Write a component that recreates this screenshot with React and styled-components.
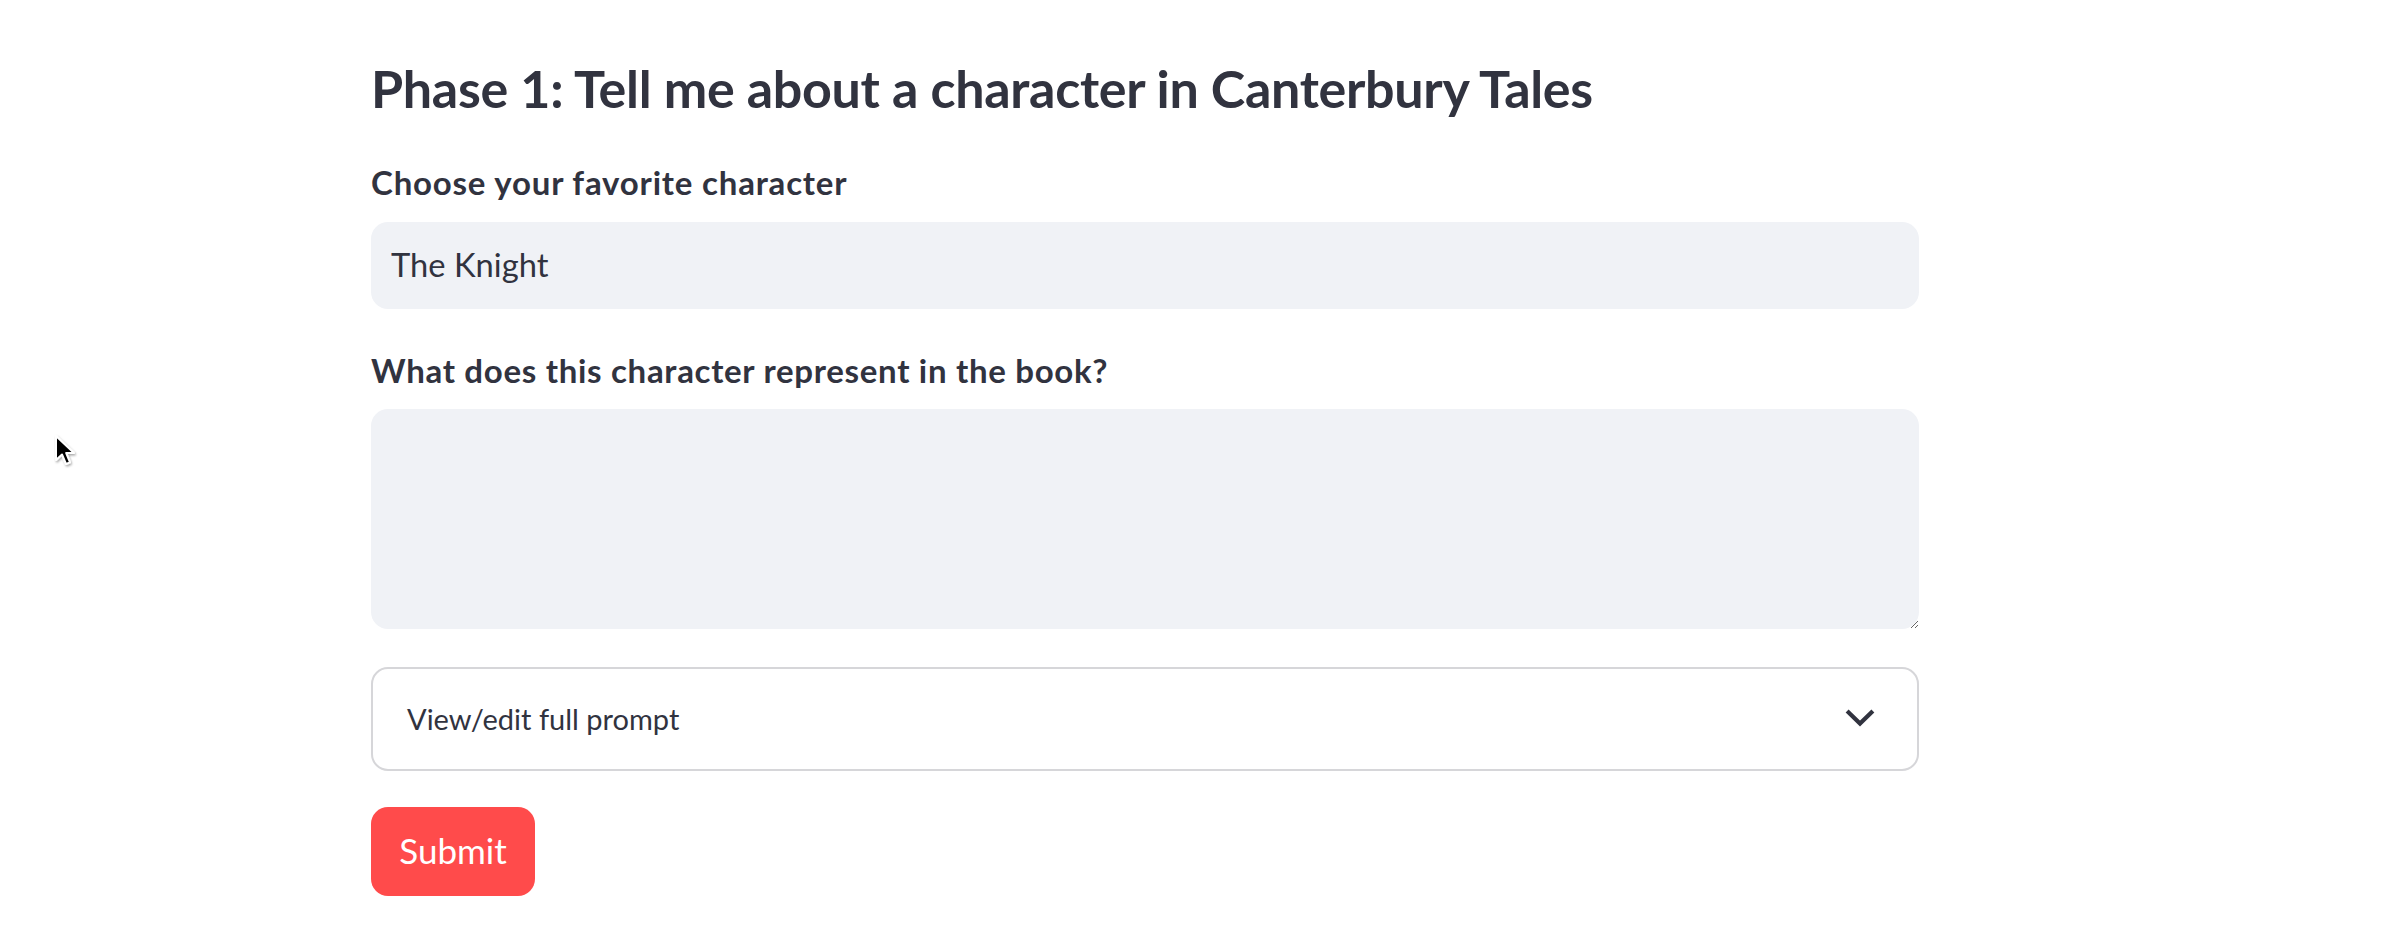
import React from "react";
import styled, { createGlobalStyle } from "styled-components";

const Global = createGlobalStyle`
  html, body { margin: 0; padding: 0; background: #ffffff; }
  body { font-family: "Lato", "Noto Sans", sans-serif; color: #31333f; }
  * { box-sizing: border-box; }
`;

const Page = styled.div`
  position: relative;
  width: 2384px;
  height: 952px;
  overflow: hidden;
  padding: 51px 0 0 371px;
`;

const Form = styled.form`
  width: 1548px;
  display: flex;
  flex-direction: column;
`;

const Heading = styled.h3`
  margin: 0;
  font-size: 52px;
  line-height: 74px;
  font-weight: 700;
  color: #31333f;
  letter-spacing: -0.3px;
`;

const Label = styled.label`
  display: block;
  margin-top: ${(p) => p.$top}px;
  font-size: 33px;
  line-height: 48px;
  font-weight: 700;
  color: #31333f;
  letter-spacing: ${(p) => p.$spacing}px;
`;

const TextInput = styled.input`
  margin-top: 16px;
  width: 100%;
  height: 87px;
  border: none;
  outline: none;
  border-radius: 17px;
  background: #f0f2f6;
  padding: 0 20px 2px;
  font-family: inherit;
  font-size: 32.7px;
  color: #31333f;
`;

const TextArea = styled.textarea`
  margin-top: 15px;
  width: 100%;
  height: 220px;
  border: none;
  outline: none;
  border-radius: 17px;
  background: #f0f2f6;
  padding: 20px;
  font-family: inherit;
  font-size: 32.7px;
  color: #31333f;
  resize: vertical;
  display: block;
`;

const Expander = styled.div`
  margin-top: 38px;
  height: 104px;
  border: 2px solid #d6d6d9;
  border-radius: 17px;
  display: flex;
  align-items: center;
  justify-content: space-between;
  padding: 0 36px 2px 34px;
`;

const ExpanderLabel = styled.span`
  font-size: 29px;
  color: #31333f;
`;

const Submit = styled.button`
  margin-top: 36px;
  align-self: flex-start;
  width: 164px;
  height: 89px;
  border: none;
  border-radius: 17px;
  background: #ff4b4b;
  color: #ffffff;
  font-family: inherit;
  font-size: 35px;
  padding: 0 0 3px;
  cursor: pointer;
`;

const Cursor = styled.svg`
  position: absolute;
  left: 54px;
  top: 434px;
`;

export default function App() {
  return (
    <Page>
      <Global />
      <Form onSubmit={(e) => e.preventDefault()}>
        <Heading>Phase 1: Tell me about a character in Canterbury Tales</Heading>
        <Label $top={33} $spacing={0.8}>Choose your favorite character</Label>
        <TextInput defaultValue="The Knight" />
        <Label $top={37} $spacing={0.7}>What does this character represent in the book?</Label>
        <TextArea />
        <Expander>
          <ExpanderLabel>View/edit full prompt</ExpanderLabel>
          <svg width="42" height="42" viewBox="0 0 24 24" fill="none">
            <path d="M5.5 8.8L12 15.2l6.5-6.4" stroke="#31333f" strokeWidth="2.4" strokeLinecap="square" />
          </svg>
        </Expander>
        <Submit type="submit">Submit</Submit>
      </Form>
      <Cursor width="26" height="36" viewBox="0 0 26 36">
        <defs>
          <filter id="sh" x="-30%" y="-30%" width="160%" height="160%">
            <feDropShadow dx="1" dy="1.5" stdDeviation="1" floodOpacity="0.35" />
          </filter>
        </defs>
        <path d="M2 2 L2 26 L8 20.5 L12 30 L16 28.3 L12.2 19 L20 19 Z" fill="#000" stroke="#fff" strokeWidth="2" strokeLinejoin="round" filter="url(#sh)" />
      </Cursor>
    </Page>
  );
}
